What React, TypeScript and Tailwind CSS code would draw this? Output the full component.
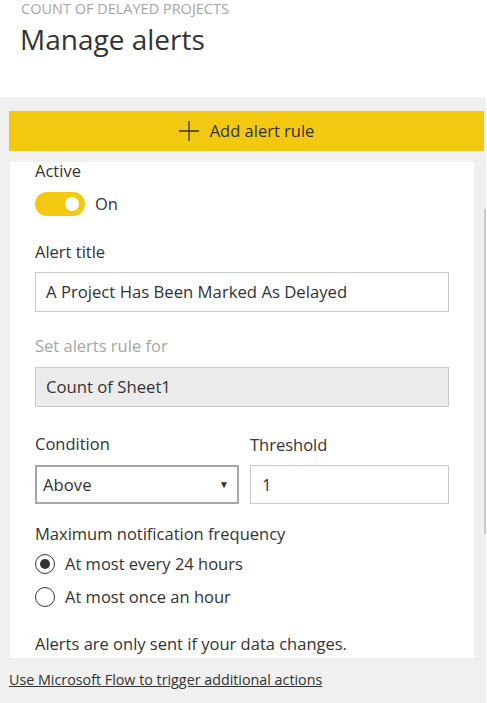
import React from "react";

const font = { fontFamily: '"Open Sans", "Noto Sans", sans-serif' };

function PlusIcon() {
  return (
    <svg width="20" height="20" viewBox="0 0 20 20" className="shrink-0">
      <path d="M10 0v20M0 10h20" stroke="#333" strokeWidth="1.3" fill="none" />
    </svg>
  );
}

function Toggle() {
  return (
    <div className="flex items-center gap-[10px]">
      <div className="w-[50px] h-[24px] rounded-full bg-[#f2c811] flex items-center justify-end pr-[6px]">
        <div className="w-[14px] h-[14px] rounded-full bg-white" />
      </div>
      <span className="text-[16.5px] text-[#333] mt-[1px]">On</span>
    </div>
  );
}

function Radio({ label, checked }: { label: string; checked?: boolean }) {
  return (
    <div className="flex items-center gap-[10px] h-[33px]">
      <div className="w-[20px] h-[20px] rounded-full border border-[#333] flex items-center justify-center">
        {checked && <div className="w-[10px] h-[10px] rounded-full bg-[#333]" />}
      </div>
      <span className="text-[16.5px] text-[#333]">{label}</span>
    </div>
  );
}

export default function App() {
  return (
    <div className="w-[487px] h-[703px] bg-white overflow-hidden" style={font}>
      <div className="pl-[20px] pt-0 h-[97px]">
        <div className="text-[14.5px] leading-[18px] text-[#a6a6a6] uppercase pl-[1px]">
          Count of delayed projects
        </div>
        <h1 className="text-[28px] leading-[36px] text-[#333] mt-[3px]">Manage alerts</h1>
      </div>
      <div className="relative w-[486px] h-[606px] bg-[#f0f0f0] pt-[14px]">
        <div className="absolute right-0 top-[112px] w-[2px] h-[325px] bg-[#c8c8c8]" />
        <button className="ml-[9px] w-[475px] h-[40px] bg-[#f2c811] flex items-center justify-center gap-[11px] text-[16.5px] text-[#333]">
          <PlusIcon />
          <span>Add alert rule</span>
        </button>
        <div className="ml-[10px] mt-[12px] w-[464px] h-[496px] bg-white pl-[25px] pr-[25px]">
          <div className="text-[16.5px] leading-[18px] text-[#333] -mt-[1px]">Active</div>
          <div className="mt-[11px]">
            <Toggle />
          </div>
          <div className="text-[16.5px] leading-[20px] text-[#333] mt-[25px]">Alert title</div>
          <div className="mt-[10px] h-[40px] border border-[#c8c8c8] flex items-center pl-[10px] text-[16.7px] text-[#333]">
            A Project Has Been Marked As Delayed
          </div>
          <div className="text-[16.5px] leading-[20px] text-[#a6a6a6] mt-[24px]">Set alerts rule for</div>
          <div className="mt-[11px] h-[40px] border border-[#c8c8c8] bg-[#ebebeb] flex items-center pl-[10px] text-[16.7px] text-[#333]">
            Count of Sheet1
          </div>
          <div className="flex gap-[11px] mt-[27px]">
            <div className="w-[204px]">
              <div className="text-[16.5px] leading-[20px] text-[#333]">Condition</div>
              <div className="mt-[11px] h-[39px] border-2 border-[#a6a6a6] flex items-center justify-between pl-[6px] pr-[8px] text-[16.7px] text-[#333]">
                <span>Above</span>
                <span className="text-[10px] text-[#333]">▼</span>
              </div>
            </div>
            <div className="flex-1">
              <div className="text-[16.5px] leading-[20px] text-[#333] mt-[1px]">Threshold</div>
              <div className="mt-[10px] h-[39px] border border-[#c8c8c8] flex items-center pl-[11px] text-[16.7px] text-[#333]">
                1
              </div>
            </div>
          </div>
          <div className="text-[16.5px] leading-[20px] text-[#333] mt-[20px]">Maximum notification frequency</div>
          <div className="mt-[4px]">
            <Radio label="At most every 24 hours" checked />
            <Radio label="At most once an hour" />
          </div>
          <div className="text-[16.5px] leading-[20px] text-[#333] mt-[20px]">
            Alerts are only sent if your data changes.
          </div>
        </div>
        <a className="block ml-[9px] mt-[13px] text-[14.3px] leading-[18px] text-[#333] underline">
          Use Microsoft Flow to trigger additional actions
        </a>
      </div>
    </div>
  );
}
